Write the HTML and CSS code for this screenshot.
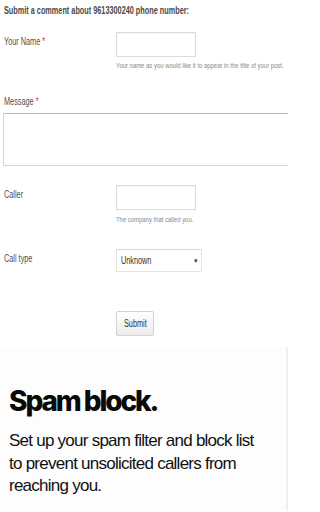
FILE: index.html
```html
<!DOCTYPE html>
<html>
<head>
<meta charset="utf-8">
<link rel="stylesheet" href="styles.css">
</head>
<body>
<div class="page">
  <form class="comment-form">
    <div class="form-title"><span class="squeeze">Submit a comment about 9613300240 phone number:</span></div>

    <div class="row row-name">
      <label class="label"><span class="squeeze">Your Name <span class="req">*</span></span></label>
      <div class="field">
        <input class="text-input" type="text">
        <div class="hint"><span class="squeeze">Your name as you would like it to appear in the title of your post.</span></div>
      </div>
    </div>

    <div class="message-block">
      <label class="label"><span class="squeeze">Message <span class="req">*</span></span></label>
      <textarea class="textarea"></textarea>
    </div>

    <div class="row row-caller">
      <label class="label"><span class="squeeze">Caller</span></label>
      <div class="field">
        <input class="text-input" type="text">
        <div class="hint"><span class="squeeze">The company that called you.</span></div>
      </div>
    </div>

    <div class="row row-type">
      <label class="label"><span class="squeeze">Call type</span></label>
      <div class="field">
        <div class="select"><span class="squeeze">Unknown</span><span class="caret">&#9662;</span></div>
      </div>
    </div>

    <div class="row row-submit">
      <div></div>
      <div class="field">
        <button class="submit" type="button"><span class="squeeze">Submit</span></button>
      </div>
    </div>
  </form>

  <section class="promo">
    <h2 class="promo-title">Spam block.</h2>
    <p class="promo-text">Set up your spam filter and block list to prevent unsolicited callers from reaching you.</p>
  </section>
</div>
</body>
</html>
```

FILE: styles.css
```css
html, body {
  margin: 0;
  padding: 0;
  background: #ffffff;
}
body {
  width: 288px;
  height: 512px;
  overflow: hidden;
  font-family: "Liberation Sans", Arial, sans-serif;
  color: #444;
}
.page {
  width: 288px;
  overflow: hidden;
}
.comment-form {
  padding: 5px 0 0 4px;
  overflow: hidden;
}
.squeeze {
  display: inline-block;
  transform: scaleX(0.73);
  transform-origin: left center;
  white-space: nowrap;
}
.form-title {
  font-size: 10px;
  line-height: 12px;
  font-weight: bold;
  color: #4a4a4a;
  height: 12px;
}
.row {
  display: grid;
  grid-template-columns: 112px 1fr;
}
.label {
  font-size: 10px;
  line-height: 12px;
  color: #505050;
  padding-top: 4px;
}
.req {
  color: #c0392b;
}
.text-input {
  display: block;
  box-sizing: border-box;
  width: 80px;
  height: 25px;
  margin: 0;
  border: 1px solid #dcdcdc;
  background: #fff;
  box-shadow: inset 0 1px 1px rgba(0,0,0,0.04);
}
.hint {
  font-size: 8px;
  line-height: 10px;
  color: #888;
  margin-top: 4px;
  height: 10px;
}
.hint .squeeze {
  transform: scaleX(0.74);
}
.row-name {
  margin-top: 15px;
}
.message-block {
  margin-top: 25px;
}
.message-block .label {
  display: block;
  padding-top: 0;
}
.textarea {
  display: block;
  box-sizing: border-box;
  margin: 5px 0 0 -1px;
  width: 290px;
  height: 53px;
  border: 1px solid #d4d4d4;
  border-top-color: #bbb;
  background: #fff;
  resize: none;
}
.row-caller {
  margin-top: 19px;
}
.row-caller .hint {
  margin-top: 5px;
}
.row-type {
  margin-top: 24px;
}
.select {
  box-sizing: border-box;
  width: 86px;
  height: 23px;
  border: 1px solid #e4e4e4;
  border-top-color: #d8d8d8;
  background: #fff;
  display: flex;
  align-items: center;
  justify-content: space-between;
  padding: 0 3px 0 4px;
  font-size: 10px;
  color: #333;
}
.caret {
  font-size: 7px;
  color: #333;
}
.row-submit {
  margin-top: 39px;
}
.submit {
  box-sizing: border-box;
  width: 38px;
  height: 25px;
  padding: 0 0 0 7px;
  text-align: left;
  border: 1px solid #d2d2d2;
  border-radius: 2px;
  background: linear-gradient(#ffffff, #ececec);
  box-shadow: 0 1px 1px rgba(0,0,0,0.06);
  font-family: "Liberation Sans", Arial, sans-serif;
  font-size: 10px;
  color: #333;
}
.promo {
  margin-top: 11px;
  height: 164px;
  background: #fdfdfd;
  border-right: 2px solid #efefef;
  box-sizing: border-box;
  padding: 38px 0 0 9px;
}
.promo-title {
  margin: 0;
  font-family: Inter, "Liberation Sans", sans-serif;
  font-weight: 800;
  font-size: 28px;
  line-height: 32px;
  letter-spacing: -2.1px;
  color: #0a0a0a;
}
.promo-text {
  margin: 13px 0 0 0;
  font-family: "Liberation Sans", Arial, sans-serif;
  font-size: 17px;
  line-height: 22.5px;
  letter-spacing: -0.75px;
  color: #111;
  width: 256px;
}
```
